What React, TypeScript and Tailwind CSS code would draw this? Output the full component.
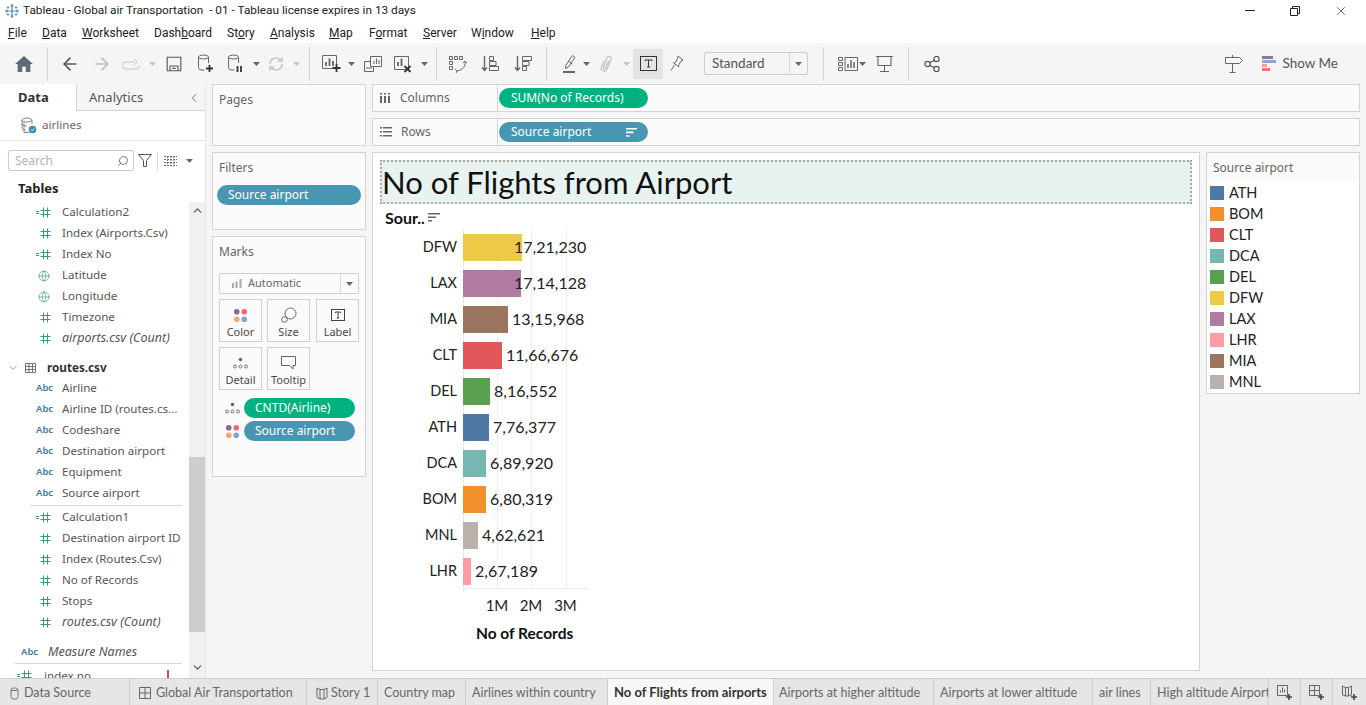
import type { ReactNode } from 'react';
import { ArrowLeft, ArrowRight, ChevronDown, ChevronLeft, ChevronUp, Globe, Search, X } from 'lucide-react';

const menus = [
  { pre: '', key: 'F', post: 'ile', w: 'w-[34px]' },
  { pre: '', key: 'D', post: 'ata', w: 'w-[40px]' },
  { pre: '', key: 'W', post: 'orksheet', w: 'w-[72px]' },
  { pre: 'Dash', key: 'b', post: 'oard', w: 'w-[73px]' },
  { pre: 'St', key: 'o', post: 'ry', w: 'w-[43px]' },
  { pre: '', key: 'A', post: 'nalysis', w: 'w-[59px]' },
  { pre: '', key: 'M', post: 'ap', w: 'w-[40px]' },
  { pre: 'F', key: 'o', post: 'rmat', w: 'w-[54px]' },
  { pre: '', key: 'S', post: 'erver', w: 'w-[48px]' },
  { pre: 'W', key: 'i', post: 'ndow', w: 'w-[60px]' },
  { pre: '', key: 'H', post: 'elp', w: 'w-[40px]' },
];

const bars = [
  { code: 'DFW', value: '17,21,230', bar: 59, gap: -8, color: '#edc948' },
  { code: 'LAX', value: '17,14,128', bar: 58, gap: -7, color: '#b07aa1' },
  { code: 'MIA', value: '13,15,968', bar: 45, gap: 4, color: '#9c755f' },
  { code: 'CLT', value: '11,66,676', bar: 39, gap: 4, color: '#e15759' },
  { code: 'DEL', value: '8,16,552', bar: 27, gap: 4, color: '#59a14f' },
  { code: 'ATH', value: '7,76,377', bar: 26, gap: 4, color: '#4e79a7' },
  { code: 'DCA', value: '6,89,920', bar: 23, gap: 4, color: '#76b7b2' },
  { code: 'BOM', value: '6,80,319', bar: 23, gap: 4, color: '#f28e2b' },
  { code: 'MNL', value: '4,62,621', bar: 15, gap: 4, color: '#bab0ac' },
  { code: 'LHR', value: '2,67,189', bar: 8, gap: 4, color: '#ff9da7' },
];

const legend = ['ATH', 'BOM', 'CLT', 'DCA', 'DEL', 'DFW', 'LAX', 'LHR', 'MIA', 'MNL'];

const tabs = [
  { label: 'Data Source', w: 'w-[130px]', pl: 'pl-[10px]', icon: 'db' },
  { label: 'Global Air Transportation', w: 'w-[177px]', pl: 'pl-[9px]', icon: 'grid' },
  { label: 'Story 1', w: 'w-[71px]', pl: 'pl-[9px]', icon: 'book' },
  { label: 'Country map', w: 'w-[88px]', pl: 'pl-[6px]' },
  { label: 'Airlines within country', w: 'w-[142px]', pl: 'pl-[6px]' },
  { label: 'No of Flights from airports', w: 'w-[166px]', pl: 'pl-[6px]', active: true },
  { label: 'Airports at higher altitude', w: 'w-[160px]', pl: 'pl-[5px]' },
  { label: 'Airports at lower altitude', w: 'w-[159px]', pl: 'pl-[6px]' },
  { label: 'air lines', w: 'w-[58px]', pl: 'pl-[6px]' },
  { label: 'High altitude Airport', w: 'w-[118px]', pl: 'pl-[6px]' },
];

function Svg({ size = 20, children, className }: { size?: number; children: ReactNode; className?: string }) {
  return (
    <svg width={size} height={size} viewBox="0 0 20 20" fill="none" stroke="currentColor" strokeWidth="1.2" className={className}>
      {children}
    </svg>
  );
}

function Slot({ w, children }: { w: string; children?: ReactNode }) {
  return <div className={`${w} h-full flex items-center justify-center shrink-0`}>{children}</div>;
}

function Caret({ light }: { light?: boolean }) {
  return (
    <svg width="7" height="4" viewBox="0 0 7 4" className={light ? 'text-[#c4c4c4]' : 'text-[#666666]'}>
      <path d="M0 0h7L3.5 4z" fill="currentColor" />
    </svg>
  );
}

function Sep({ w }: { w: string }) {
  return (
    <div className={`${w} h-full flex items-center justify-center shrink-0`}>
      <div className="w-px h-[34px] bg-[#d4d4d4]" />
    </div>
  );
}

function HashIcon({ calc, className }: { calc?: boolean; className?: string }) {
  return (
    <svg width="20" height="11" viewBox="0 0 20 11" stroke="currentColor" strokeWidth="1" className={className ?? 'text-[#3f9a7c]'}>
      {calc && <path d="M1 4.5h3M1 6.5h3" />}
      <path d="M8.5 0.5v10M12.5 0.5v10M5.5 3.5h10M5.5 7.5h10" />
    </svg>
  );
}

function Field({ name, kind, italic }: { name: string; kind: 'hash' | 'calc' | 'globe' | 'abc'; italic?: boolean }) {
  return (
    <div className="h-[21px] flex items-center pr-1">
      <div className="w-[62px] shrink-0 flex justify-end pr-[7px]">
        {kind === 'abc' && <span className="w-[19px] text-[9.5px] font-semibold text-[#3f7a99]">Abc</span>}
        {kind === 'hash' && <HashIcon />}
        {kind === 'calc' && <HashIcon calc />}
        {kind === 'globe' && (
          <div className="w-[20px] flex justify-end pr-[5px]">
            <Globe size={12} strokeWidth={1.3} className="text-[#3f9a7c]" />
          </div>
        )}
      </div>
      <span className={`text-[#555555] whitespace-nowrap ${italic ? 'italic text-[12.5px]' : 'text-[11.6px] mb-[2px]'}`}>{name}</span>
    </div>
  );
}

function Pill({ label, tone, className, sort }: { label: string; tone: 'green' | 'blue'; className: string; sort?: boolean }) {
  return (
    <div className={`h-[20px] rounded-full flex items-center justify-between px-[11px] text-[12px] text-white ${tone === 'green' ? 'bg-[#00b180]' : 'bg-[#4996b2]'} ${className}`}>
      <span className="whitespace-nowrap">{label}</span>
      {sort && (
        <svg width="11" height="9" viewBox="0 0 11 9" fill="#ffffff">
          <path d="M0 0h11v1.6H0zM0 3.6h7.5v1.6H0zM0 7.2h3.5v1.6H0z" />
        </svg>
      )}
    </div>
  );
}

function ColorDots({ size = 16 }: { size?: number }) {
  return (
    <svg width={size} height={size} viewBox="0 0 16 16">
      <circle cx="4" cy="4" r="3" fill="#7f6a99" />
      <circle cx="12" cy="4" r="3" fill="#f1667c" />
      <circle cx="4" cy="12" r="3" fill="#f3a57a" />
      <circle cx="12" cy="12" r="3" fill="#82a5cc" />
    </svg>
  );
}

function DetailDots() {
  return (
    <svg width="15" height="12" viewBox="0 0 15 12" fill="none" stroke="#666666" strokeWidth="0.9">
      <circle cx="7.5" cy="2.5" r="1.8" fill="#666666" stroke="none" />
      <circle cx="2" cy="9.5" r="1.5" />
      <circle cx="7.5" cy="9.5" r="1.5" />
      <circle cx="13" cy="9.5" r="1.5" />
    </svg>
  );
}

function MarkCard({ label, children, className }: { label: string; children: ReactNode; className?: string }) {
  return (
    <div className={`w-[43px] h-[43px] border border-[#d0d0d0] flex flex-col items-center justify-between pt-[6px] pb-[2px] text-[11px] text-[#4a4a4a] leading-[14px] ${className ?? ''}`}>
      <div className="h-[18px] flex items-center">{children}</div>
      <span>{label}</span>
    </div>
  );
}

function TIcon({ size = 14 }: { size?: number }) {
  return (
    <svg width={size} height={size} viewBox="0 0 14 14" fill="none" stroke="#444444" strokeWidth="1">
      <rect x="0.5" y="1.5" width="13" height="11" />
      <path d="M4.5 5V4h5v1M7 4v6M5.8 10h2.4" />
    </svg>
  );
}

function TabIcon({ kind }: { kind?: string }) {
  if (kind === 'db') {
    return (
      <svg width="9" height="13" viewBox="0 0 9 13" fill="none" stroke="#777777" className="mr-[5px]">
        <rect x="1" y="1" width="7" height="11" rx="2.5" />
        <path d="M1 3.5h7" />
      </svg>
    );
  }
  if (kind === 'grid') {
    return (
      <svg width="12" height="12" viewBox="0 0 12 12" fill="none" stroke="#666666" className="mr-[5px]">
        <path d="M.5.5h11v11H.5zM6 .5v11M.5 6h11" />
      </svg>
    );
  }
  if (kind === 'book') {
    return (
      <svg width="12" height="13" viewBox="0 0 12 13" fill="none" stroke="#666666" className="mr-[3px]">
        <path d="M1 1l3 1.5h4L11 1v9.5L8 12H4l-3-1.5zM4 2.5V12M8 2.5V12" />
      </svg>
    );
  }
  return null;
}

function AddSheetIcon({ kind }: { kind: 'sheet' | 'dash' | 'story' }) {
  return (
    <svg width="17" height="17" viewBox="0 0 17 17" fill="none" stroke="#666666">
      {kind === 'sheet' && <path d="M1.5 1.5h10v10h-10zM4.5 8.5v-2M6.5 8.5v-5M8.5 8.5v-3" />}
      {kind === 'dash' && <path d="M1.5 1.5h10v10h-10zM6.5 1.5v10M1.5 6.5h10" />}
      {kind === 'story' && <path d="M1.5 2l3 1.5h3l3-1.5v9l-3 1h-3l-3-1zM4.5 3.5V12M7.5 3.5V12" />}
      <path d="M13 10v6M10 13h6" stroke="#444444" strokeWidth="1.6" />
    </svg>
  );
}

function Toolbar() {
  return (
    <div className="h-[41px] bg-[#f5f5f5] flex items-center shrink-0 pl-[8px] pr-[28px] font-['Lato',sans-serif]">
      <Slot w="w-[32px]">
        <svg width="18" height="16" viewBox="0 0 18 16" fill="#5d6b7b">
          <path d="M9 0L0 8h2.6v8h4.6v-5.2h3.6V16h4.6V8H18z" />
        </svg>
      </Slot>
      <Sep w="w-[14px]" />
      <Slot w="w-[32px]"><ArrowLeft size={20} strokeWidth={2} className="text-[#555555]" /></Slot>
      <Slot w="w-[32px]"><ArrowRight size={20} strokeWidth={2} className="text-[#bdbdbd]" /></Slot>
      <Slot w="w-[27px]">
        <svg width="19" height="12" viewBox="0 0 19 12" fill="none" stroke="#c4c4c4">
          <path d="M13 4H3.5a3 3 0 000 7h11a3 3 0 003-3M12 1l3 3-3 3" />
        </svg>
      </Slot>
      <Slot w="w-[14px]"><Caret light /></Slot>
      <Slot w="w-[30px]">
        <Svg size={16} className="text-[#555555]">
          <path d="M1.5 1.5h17v17h-17zM5 18.5v-6h10v6M8 15.5h4" strokeWidth="1.4" />
        </Svg>
      </Slot>
      <Slot w="w-[32px]">
        <svg width="17" height="19" viewBox="0 0 17 19" fill="none" stroke="#666666">
          <ellipse cx="6.5" cy="3" rx="5" ry="2" />
          <path d="M1.5 3v10.5a3 3 0 003 2.5h3M11.5 3v6" />
          <path d="M12.5 11v7M9 14.5h7" stroke="#333333" strokeWidth="1.8" />
        </svg>
      </Slot>
      <Slot w="w-[29px]">
        <svg width="17" height="19" viewBox="0 0 17 19" fill="none" stroke="#666666">
          <ellipse cx="6.5" cy="3" rx="5" ry="2" />
          <path d="M1.5 3v10.5a3 3 0 003 2.5h3M11.5 3v6" />
          <path d="M10.5 12v6M14 12v6" stroke="#333333" strokeWidth="1.8" />
        </svg>
      </Slot>
      <Slot w="w-[12px]"><Caret /></Slot>
      <Slot w="w-[28px]">
        <svg width="18" height="18" viewBox="0 0 18 18" fill="none" stroke="#c4c4c4" strokeWidth="1.5">
          <path d="M3 9a6 6 0 0110-4.5L15 6M15 9a6 6 0 01-10 4.5L3 12M15 2v4h-4M3 16v-4h4" />
        </svg>
      </Slot>
      <Slot w="w-[12px]"><Caret light /></Slot>
      <Sep w="w-[15px]" />
      <Slot w="w-[28px]">
        <svg width="21" height="19" viewBox="0 0 21 19" fill="none" stroke="#666666">
          <path d="M1.5 1.5h14v13h-14z" />
          <path d="M5 12V8M8.5 12V4.5M12 12V7" strokeWidth="1.8" />
          <path d="M15.5 10v8M11.5 14h8" stroke="#333333" strokeWidth="1.8" />
        </svg>
      </Slot>
      <Slot w="w-[12px]"><Caret /></Slot>
      <Slot w="w-[30px]">
        <svg width="19" height="18" viewBox="0 0 19 18" fill="none" stroke="#666666">
          <path d="M7.5 1.5h11v10h-11zM11 9V6M13.5 9V3.5M16 9V5M7.5 6.5h-6v10h9v-5M4 14v-2M6 14v-2M8 14v-2" />
        </svg>
      </Slot>
      <Slot w="w-[32px]">
        <svg width="20" height="18" viewBox="0 0 20 18" fill="none" stroke="#666666">
          <path d="M1.5 1.5h14v13h-14z" />
          <path d="M5 11V7M8.5 11V3.5" strokeWidth="1.8" />
          <path d="M11.5 11l6 6M17.5 11l-6 6" stroke="#333333" strokeWidth="1.8" />
        </svg>
      </Slot>
      <Slot w="w-[10px]"><Caret /></Slot>
      <Sep w="w-[14px]" />
      <Slot w="w-[30px]">
        <svg width="20" height="18" viewBox="0 0 20 18" fill="none" stroke="#666666">
          <path d="M1.5 1.5h3v3h-3zM6.5 1.5h3v3h-3zM11.5 1.5h3v3h-3zM1.5 6.5h3v3h-3zM1.5 11.5h3v3h-3z" />
          <path d="M17 6c1 5-2 9-8 10M7 14l2 2-1 2M15 8l2-2 2 2" />
        </svg>
      </Slot>
      <Slot w="w-[34px]">
        <svg width="18" height="17" viewBox="0 0 18 17" fill="none" stroke="#666666">
          <path d="M3.5 1v14M1 12.5l2.5 3 2.5-3" strokeWidth="1.4" />
          <path d="M8.5 1.5h4v4h-4zM8.5 6.5h6.5v4H8.5zM8.5 11.5h9v4h-9z" />
        </svg>
      </Slot>
      <Slot w="w-[32px]">
        <svg width="18" height="17" viewBox="0 0 18 17" fill="none" stroke="#666666">
          <path d="M3.5 1v14M1 12.5l2.5 3 2.5-3" strokeWidth="1.4" />
          <path d="M8.5 1.5h9v4h-9zM8.5 6.5h6.5v4H8.5zM8.5 11.5h4v4h-4z" />
        </svg>
      </Slot>
      <Sep w="w-[14px]" />
      <Slot w="w-[3px]" />
      <Slot w="w-[26px]">
        <svg width="14" height="19" viewBox="0 0 14 19" fill="none" stroke="#666666">
          <path d="M4 11L10.5 1.5l2.5 2L6.5 13l-3 1.5zM6 7l4.5 3" />
          <path d="M1 18h12" stroke="#444444" strokeWidth="1.6" />
        </svg>
      </Slot>
      <Slot w="w-[8px]"><Caret /></Slot>
      <Slot w="w-[32px]">
        <svg width="13" height="18" viewBox="0 0 13 18" fill="none" stroke="#c4c4c4" strokeWidth="1.3">
          <path d="M4 6l-2.5 6c-1.5 4 4 6 5.500 2L11 4.5c1-3-3-4.500-4-1.500L3.500 12c-.5 1.500 1.500 2.500 2.200 1L9 5.500" />
        </svg>
      </Slot>
      <Slot w="w-[8px]"><Caret light /></Slot>
      <div className="w-[3px] shrink-0" />
      <div className="w-[30px] h-[30px] bg-[#e4e4e4] flex items-center justify-center shrink-0">
        <svg width="17" height="15" viewBox="0 0 17 15" fill="none" stroke="#333333">
          <rect x="0.5" y="0.5" width="16" height="14" />
          <path d="M5 5V4h7v1M8.5 4v7M7 11h3" />
        </svg>
      </div>
      <Slot w="w-[28px]">
        <svg width="14" height="17" viewBox="0 0 14 17" fill="none" stroke="#666666">
          <path d="M8 1l5 4-2 1-2.500 4.500L9 12 3.500 8l2-.5L7.500 3.500zM4.500 10L1 15.500" />
        </svg>
      </Slot>
      <div className="ml-[13px] w-[104px] h-[23px] border border-[#cfcfcf] rounded-[2px] flex items-center text-[13.5px] text-[#555555] shrink-0">
        <span className="flex-1 pl-[7px]">Standard</span>
        <div className="w-[18px] h-full border-l border-[#d8d8d8] flex items-center justify-center"><Caret /></div>
      </div>
      <Sep w="w-[30px]" />
      <Slot w="w-[20px]">
        <svg width="20" height="14" viewBox="0 0 20 14" fill="none" stroke="#666666">
          <path d="M.5.5h4v3h-4zM.5 5.5h4v3h-4zM.5 10.500h4v3h-4zM7 .5h12.500v13H7z" />
          <path d="M10 11V7M13 11V3M16 11V5" strokeWidth="1.5" />
        </svg>
      </Slot>
      <Slot w="w-[8px]"><Caret /></Slot>
      <Slot w="w-[36px]">
        <svg width="17" height="18" viewBox="0 0 17 18" fill="none" stroke="#666666">
          <path d="M0 1.500h17M2 1.500v9h13v-9M8.500 10.500V16M4 16.500h9" strokeWidth="1.1" />
        </svg>
      </Slot>
      <Sep w="w-[13px]" />
      <Slot w="w-[34px]">
        <svg width="16" height="16" viewBox="0 0 16 16" fill="none" stroke="#555555" strokeWidth="1.2">
          <circle cx="3.5" cy="8" r="2.6" />
          <circle cx="12.5" cy="3" r="2.6" />
          <circle cx="12.5" cy="13" r="2.6" />
          <path d="M5.8 6.800l4.400-2.500M5.800 9.200l4.400 2.500" />
        </svg>
      </Slot>
      <div className="flex-1" />
      <Slot w="w-[28px]">
        <svg width="18" height="18" viewBox="0 0 18 18" fill="none" stroke="#666666">
          <path d="M.5 2.500h14l3 3-3 3H.5zM7.500 2.500V0M7.500 8.500V17M4.500 17.500h6" />
        </svg>
      </Slot>
      <div className="ml-[14px] flex items-center">
        <svg width="14" height="16" viewBox="0 0 14 16" className="mr-[6px]">
          <rect x="0" y="0" width="11" height="3" fill="#8a7aa0" />
          <rect x="0" y="4" width="14" height="3" fill="#88a8d0" />
          <rect x="0" y="8" width="5" height="3" fill="#f4a97c" />
          <rect x="0" y="12" width="8" height="3" fill="#f5707f" />
        </svg>
        <span className="text-[13.5px] text-[#555555]">Show Me</span>
      </div>
    </div>
  );
}

function LeftPanel() {
  return (
    <div className="w-[206px] shrink-0 bg-white flex flex-col border-r border-[#e6e6e6]">
      <div className="h-[27px] flex shrink-0 text-[13px]">
        <div className="w-[76px] flex items-center pl-[18px] font-bold text-[#333333]">Data</div>
        <div className="flex-1 flex items-center justify-between bg-[#f5f5f5] border-l border-b border-[#d4d4d4] pl-[12px] pr-[4px] pt-[2px] text-[#555555]">
          <span>Analytics</span>
          <ChevronLeft size={14} strokeWidth={1.5} className="text-[#666666]" />
        </div>
      </div>
      <div className="h-[30px] flex items-center pl-[20px] border-b border-[#e4e4e4] shrink-0">
        <svg width="17" height="17" viewBox="0 0 17 17" fill="none" stroke="#777777" strokeWidth="0.9">
          <ellipse cx="7" cy="3" rx="5" ry="2" />
          <path d="M2 3v8c0 1 1.500 2 3.500 2M12 3v4M2 7c0 1 2 2 5 2M4 5.500v10h5" />
          <circle cx="12.5" cy="12.5" r="3.8" fill="#3f8cb0" stroke="none" />
          <path d="M10.800 12.500l1.300 1.300 2-2.300" stroke="#ffffff" />
        </svg>
        <span className="ml-[5px] text-[11.6px] text-[#666666] mb-[1px]">airlines</span>
      </div>
      <div className="h-[38px] flex items-center pl-[8px] pt-[1px] shrink-0">
        <div className="w-[126px] h-[21px] border border-[#cccccc] rounded-[2px] flex items-center justify-between pl-[6px] pr-[4px]">
          <span className="text-[12px] text-[#b4b4b4]">Search</span>
          <Search size={12} strokeWidth={1.5} className="text-[#555555] -scale-x-100" />
        </div>
        <svg width="14" height="13" viewBox="0 0 14 13" fill="none" stroke="#555555" className="ml-[4px]">
          <path d="M.5.500h13L8.500 6.500v6h-3v-6z" />
        </svg>
        <div className="w-px h-[18px] bg-[#d8d8d8] ml-[5px]" />
        <svg width="13" height="10" viewBox="0 0 13 10" fill="none" stroke="#666666" className="ml-[6px]">
          <path d="M0 .5h13M0 3.500h13M0 6.500h13M0 9.500h13M3.500 0v10M7 0v10M10 0v10" strokeDasharray="2 1" />
        </svg>
        <div className="ml-[9px]"><Caret /></div>
      </div>
      <div className="h-[19px] flex items-center pl-[18px] text-[13px] font-bold text-[#222222] shrink-0 mb-[4px]">Tables</div>
      <div className="flex-1 min-h-0 flex overflow-hidden">
        <div className="w-[189px] shrink-0 overflow-hidden">
          <Field name="Calculation2" kind="calc" />
          <Field name="Index (Airports.Csv)" kind="hash" />
          <Field name="Index No" kind="calc" />
          <Field name="Latitude" kind="globe" />
          <Field name="Longitude" kind="globe" />
          <Field name="Timezone" kind="hash" />
          <Field name="airports.csv (Count)" kind="hash" italic />
          <div className="h-[21px] mt-[8px] flex items-center pl-[7px]">
            <ChevronDown size={12} strokeWidth={1.5} className="text-[#777777]" />
            <svg width="11" height="10" viewBox="0 0 11 10" fill="none" stroke="#777777" className="ml-[6px]">
              <path d="M.5.500h10v9H.5zM.5 3.500h10M.5 6.500h10M4 .5v9M7.500 .5v9" />
            </svg>
            <span className="ml-[11px] text-[11.7px] font-bold text-[#333333]">routes.csv</span>
          </div>
          <Field name="Airline" kind="abc" />
          <Field name="Airline ID (routes.cs..." kind="abc" />
          <Field name="Codeshare" kind="abc" />
          <Field name="Destination airport" kind="abc" />
          <Field name="Equipment" kind="abc" />
          <Field name="Source airport" kind="abc" />
          <div className="h-px bg-[#d8d8d8] ml-[30px] mr-[7px] mt-[1px] mb-[1px]" />
          <Field name="Calculation1" kind="calc" />
          <Field name="Destination airport ID" kind="hash" />
          <Field name="Index (Routes.Csv)" kind="hash" />
          <Field name="No of Records" kind="hash" />
          <Field name="Stops" kind="hash" />
          <Field name="routes.csv (Count)" kind="hash" italic />
          <div className="h-[21px] mt-[9px] flex items-center pl-[21px]">
            <span className="w-[27px] text-[9.5px] font-semibold text-[#3f7a99]">Abc</span>
            <span className="text-[12.5px] italic text-[#555555]">Measure Names</span>
          </div>
          <div className="h-px bg-[#d8d8d8] ml-[15px] mr-[7px] mb-[1px]" />
          <div className="h-[21px] flex items-center pl-[19px] relative">
            <HashIcon calc className="text-[#3f9a7c] -ml-[3px] mr-[8px]" />
            <span className="text-[11.6px] text-[#555555]">index no</span>
            <div className="absolute left-[167px] top-[5px] w-[2px] h-[12px] bg-[#c9504a]" />
          </div>
        </div>
        <div className="w-[16px] shrink-0 bg-[#f0f0f0] flex flex-col items-center">
          <ChevronUp size={13} strokeWidth={2.2} className="text-[#555555] mt-[2px] shrink-0" />
          <div className="w-full h-[175px] bg-[#cdcdcd] mt-[240px] shrink-0" />
          <ChevronDown size={13} strokeWidth={2.2} className="text-[#555555] mt-[29px] shrink-0" />
        </div>
      </div>
    </div>
  );
}

function Shelves() {
  return (
    <div className="w-[154px] shrink-0 ml-[6px] flex flex-col gap-[6px] pb-[7px]">
      <div className="h-[62px] border border-[#d4d4d4] bg-[#fafafa] pl-[6px] pt-[6px] text-[12px] text-[#666666]">Pages</div>
      <div className="h-[78px] border border-[#d4d4d4] bg-[#fafafa] pt-[6px] px-[4px]">
        <div className="pl-[2px] text-[12px] text-[#666666] h-[17px] leading-[17px] mb-[9px]">Filters</div>
        <Pill label="Source airport" tone="blue" className="w-[144px]" />
      </div>
      <div className="h-[241px] border border-[#d4d4d4] bg-[#fafafa] pt-[6px] px-[6px]">
        <div className="text-[12px] text-[#666666] h-[17px] leading-[17px]">Marks</div>
        <div className="mt-[13px] w-[140px] h-[21px] border border-[#d0d0d0] rounded-[2px] flex items-center">
          <div className="flex-1 flex items-center pl-[12px] text-[11px] text-[#666666]">
            <svg width="10" height="9" viewBox="0 0 10 9" fill="#aaaaaa" className="mr-[6px]">
              <path d="M0 4h2v5H0zM3.500 2.500h2V9h-2zM7.500 0h2v9h-2z" />
            </svg>
            Automatic
          </div>
          <div className="w-[18px] h-full border-l border-[#d8d8d8] flex items-center justify-center"><Caret /></div>
        </div>
        <div className="mt-[5px] flex flex-col gap-[5px]">
          <div className="flex gap-[5px]">
            <MarkCard label="Color"><ColorDots size={15} /></MarkCard>
            <MarkCard label="Size">
              <svg width="16" height="16" viewBox="0 0 16 16" fill="none" stroke="#666666">
                <circle cx="9.500" cy="6.500" r="5.500" />
                <circle cx="3.500" cy="12.500" r="2.800" fill="#fafafa" />
              </svg>
            </MarkCard>
            <MarkCard label="Label" className="ml-[1px]"><TIcon /></MarkCard>
          </div>
          <div className="flex gap-[5px]">
            <MarkCard label="Detail"><DetailDots /></MarkCard>
            <MarkCard label="Tooltip">
              <svg width="15" height="14" viewBox="0 0 15 14" fill="none" stroke="#666666">
                <path d="M.5.500h14v9h-2.500v3.500L8.500 9.500h-8z" />
              </svg>
            </MarkCard>
          </div>
        </div>
        <div className="mt-[8px] flex flex-col gap-[3px]">
          <div className="flex items-center">
            <div className="w-[25px] pl-[6px]"><DetailDots /></div>
            <Pill label="CNTD(Airline)" tone="green" className="w-[111px]" />
          </div>
          <div className="flex items-center">
            <div className="w-[25px] pl-[6px]"><ColorDots size={15} /></div>
            <Pill label="Source airport" tone="blue" className="w-[111px]" />
          </div>
        </div>
      </div>
    </div>
  );
}

function Chart() {
  return (
    <div className="w-[828px] h-[519px] shrink-0 border border-[#d4d4d4] bg-white pt-[7px] px-[7px] font-['Lato',sans-serif] text-[#222222]">
      <div className="h-[44px] bg-[#e8f2f0] border-2 border-dotted border-[#a9a99f] flex items-center text-[31px] text-[#111111] leading-none">
        No of Flights from Airport
      </div>
      <div className="h-[25px] flex items-center pl-[5px] pt-[2px] text-[16px] font-bold text-[#111111]">
        Sour..
        <svg width="12" height="9" viewBox="0 0 12 9" fill="#666666" className="ml-[3px]">
          <path d="M0 0h12v1.500H0zM0 3.500h8v1.500H0zM0 7h4v1.500H0z" />
        </svg>
      </div>
      <div className="relative -ml-[7px] w-[215px]">
        <div className="absolute left-[90px] top-0 h-[363px] w-px bg-[#e8e8e8]" />
        <div className="absolute left-[124px] top-0 h-[359px] w-px bg-[#eeeeee]" />
        <div className="absolute left-[158px] top-0 h-[359px] w-px bg-[#eeeeee]" />
        <div className="absolute left-[193px] top-0 h-[359px] w-px bg-[#eeeeee]" />
        <div className="absolute left-[90px] top-[359px] w-[125px] h-px bg-[#eeeeee]" />
        {bars.map((b) => (
          <div key={b.code} className="relative h-[36px] flex items-center">
            <span className="w-[84px] text-right text-[14.5px] text-[#222222]">{b.code}</span>
            <div className="h-[27px] ml-[6px]" style={{ width: b.bar, backgroundColor: b.color }} />
            <span className="text-[16px] text-[#222222] whitespace-nowrap" style={{ marginLeft: b.gap }}>{b.value}</span>
          </div>
        ))}
      </div>
      <div className="-ml-[7px] mt-[6px] flex pl-[107px] h-[20px] items-center text-[15px] text-[#222222]">
        <span className="w-[34px] text-center">1M</span>
        <span className="w-[34px] text-center">2M</span>
        <span className="w-[35px] text-center">3M</span>
      </div>
      <div className="-ml-[7px] mt-[8px] pl-[103px] text-[15.5px] font-bold text-[#111111] leading-[20px]">No of Records</div>
    </div>
  );
}

function Legend() {
  return (
    <div className="w-[154px] h-[242px] shrink-0 border border-[#d4d4d4] bg-white font-['Lato',sans-serif]">
      <div className="h-[29px] bg-[#fafafa] flex items-center pl-[6px] text-[12px] text-[#666666] font-['Noto_Sans',sans-serif]">Source airport</div>
      <div className="pl-[3px]">
        {legend.map((code) => {
          const color = bars.find((b) => b.code === code)?.color;
          return (
            <div key={code} className="h-[21px] flex items-center">
              <div className="w-[14px] h-[14px]" style={{ backgroundColor: color }} />
              <span className="ml-[5px] text-[14.5px] text-[#222222]">{code}</span>
            </div>
          );
        })}
      </div>
    </div>
  );
}

function TabBar() {
  return (
    <div className="h-[27px] shrink-0 bg-[#e6e6e6] border-t border-[#cfcfcf] flex font-['Lato',sans-serif] text-[12.5px] text-[#666666] overflow-hidden">
      {tabs.map((t) => (
        <div
          key={t.label}
          className={`${t.w} ${t.pl} shrink-0 border-r border-[#cfcfcf] flex items-center overflow-hidden whitespace-nowrap ${t.active ? 'bg-[#f8f8f8] pt-[1px] font-bold text-[13px] text-[#333333]' : 'pt-[2px]'}`}
        >
          <TabIcon kind={t.icon} />
          {t.label}
        </div>
      ))}
      <div className="w-[32px] shrink-0 border-r border-[#cfcfcf] flex items-center justify-center"><AddSheetIcon kind="sheet" /></div>
      <div className="w-[32px] shrink-0 border-r border-[#cfcfcf] flex items-center justify-center"><AddSheetIcon kind="dash" /></div>
      <div className="flex-1 flex items-center justify-center"><AddSheetIcon kind="story" /></div>
    </div>
  );
}

export default function App() {
  return (
    <div className="w-[1366px] h-[705px] overflow-hidden flex flex-col bg-white font-['Noto_Sans',sans-serif]">
      <div className="h-[22px] flex items-center shrink-0 relative font-['Roboto',sans-serif]">
        <svg width="16" height="16" viewBox="0 0 16 16" stroke="#3f7fa8" strokeWidth="1.1" className="ml-[4px]">
          <path d="M8 2v12M5.500 8h5M8 1v4M6.500 3h3M8 11v4M6.500 13h3M1 8h4M3 6.500v3M11 8h4M13 6.500v3" />
          <path d="M4 3v3M2.500 4.500h3M12 3v3M10.500 4.500h3M4 10v3M2.500 11.500h3M12 10v3M10.500 11.500h3" stroke="#6f96bd" strokeWidth="0.9" />
        </svg>
        <span className="ml-[3px] text-[11.8px] text-[#222222] whitespace-pre">Tableau - Global air Transportation  - 01 - Tableau license expires in 13 days</span>
        <div className="ml-auto flex items-center pr-[18px] -mt-[1px]">
          <div className="w-[10px] h-px bg-[#222222] mr-[35px]" />
          <svg width="10" height="10" viewBox="0 0 10 10" fill="none" stroke="#222222" className="mr-[34px]">
            <path d="M.5 2.500h7v7h-7zM2.500 2.500V.5h7v7h-2" />
          </svg>
          <X size={14} strokeWidth={1.1} className="text-[#222222]" />
        </div>
      </div>
      <div className="h-[21px] flex items-center pl-[8px] text-[12px] text-[#222222] shrink-0 font-['Roboto',sans-serif]">
        {menus.map((m) => (
          <span key={m.pre + m.key + m.post} className={`${m.w} shrink-0 whitespace-nowrap`}>
            {m.pre}<span className="underline">{m.key}</span>{m.post}
          </span>
        ))}
      </div>
      <Toolbar />
      <div className="flex-1 min-h-0 flex bg-[#f5f5f5]">
        <LeftPanel />
        <Shelves />
        <div className="ml-[6px] flex-1 flex flex-col gap-[6px]">
          <div className="h-[28px] w-[988px] border border-[#d4d4d4] bg-[#fafafa] flex items-center">
            <div className="w-[125px] h-full border-r border-[#d4d4d4] flex items-center pl-[7px] text-[12px] text-[#666666]">
              <svg width="10" height="10" viewBox="0 0 10 10" fill="#666666" className="mr-[10px]">
                <path d="M0 3h2v7H0zM4 3h2v7H4zM8 3h2v7H8zM0 0h2v1.500H0zM4 0h2v1.500H4zM8 0h2v1.500H8z" />
              </svg>
              Columns
            </div>
            <Pill label="SUM(No of Records)" tone="green" className="w-[149px] ml-[1px] pl-[12px] text-[12.4px]" />
          </div>
          <div className="h-[28px] w-[988px] border border-[#d4d4d4] bg-[#fafafa] flex items-center">
            <div className="w-[125px] h-full border-r border-[#d4d4d4] flex items-center pl-[7px] text-[12px] text-[#666666]">
              <svg width="12" height="10" viewBox="0 0 12 10" fill="#666666" className="mr-[9px]">
                <path d="M0 0h2v1.500H0zM3 0h9v1.500H3zM0 4h2v1.500H0zM3 4h9v1.500H3zM0 8h2v1.500H0zM3 8h9v1.500H3z" />
              </svg>
              Rows
            </div>
            <Pill label="Source airport" tone="blue" className="w-[149px] ml-[1px] pl-[12px]" sort />
          </div>
          <div className="flex gap-[6px] items-start">
            <Chart />
            <Legend />
          </div>
        </div>
      </div>
      <TabBar />
    </div>
  );
}
